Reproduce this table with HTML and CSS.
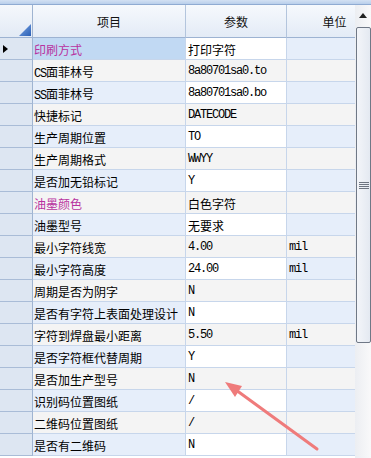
FILE: index.html
```html
<!DOCTYPE html>
<html>
<head>
<meta charset="utf-8">
<link rel="stylesheet" href="styles.css">
</head>
<body>
<div class="window">
  <div class="topstrip"></div>
  <div class="main">
    <div class="viewport">
      <div class="table">
        <div class="row head">
          <div class="rh corner"><svg width="12" height="12" viewBox="0 0 12 12"><defs><linearGradient id="tg" x1="0" y1="0" x2="1" y2="1"><stop offset="0" stop-color="#7fa9e6"/><stop offset="1" stop-color="#2a5fb5"/></linearGradient></defs><polygon points="12,0 12,12 0,12" fill="url(#tg)"/></svg></div>
          <div class="hc">项目</div>
          <div class="hc">参数</div>
          <div class="hc">单位</div>
        </div>
        <div class="row sel">
          <div class="rh"><svg width="5" height="8" viewBox="0 0 5 8"><polygon points="0,0 5,4 0,8" fill="#000"/></svg></div>
          <div class="c name pink">印刷方式</div>
          <div class="c val">打印字符</div>
          <div class="c unit"></div>
        </div>
        <div class="row alt">
          <div class="rh"></div>
          <div class="c name"><span class="m">CS</span>面菲林号</div>
          <div class="c val m">8a80701sa0.to</div>
          <div class="c unit"></div>
        </div>
        <div class="row">
          <div class="rh"></div>
          <div class="c name"><span class="m">SS</span>面菲林号</div>
          <div class="c val m">8a80701sa0.bo</div>
          <div class="c unit"></div>
        </div>
        <div class="row alt">
          <div class="rh"></div>
          <div class="c name">快捷标记</div>
          <div class="c val m">DATECODE</div>
          <div class="c unit"></div>
        </div>
        <div class="row">
          <div class="rh"></div>
          <div class="c name">生产周期位置</div>
          <div class="c val m">TO</div>
          <div class="c unit"></div>
        </div>
        <div class="row alt">
          <div class="rh"></div>
          <div class="c name">生产周期格式</div>
          <div class="c val m">WWYY</div>
          <div class="c unit"></div>
        </div>
        <div class="row">
          <div class="rh"></div>
          <div class="c name">是否加无铅标记</div>
          <div class="c val m">Y</div>
          <div class="c unit"></div>
        </div>
        <div class="row alt">
          <div class="rh"></div>
          <div class="c name pink">油墨颜色</div>
          <div class="c val">白色字符</div>
          <div class="c unit"></div>
        </div>
        <div class="row">
          <div class="rh"></div>
          <div class="c name">油墨型号</div>
          <div class="c val">无要求</div>
          <div class="c unit"></div>
        </div>
        <div class="row alt">
          <div class="rh"></div>
          <div class="c name">最小字符线宽</div>
          <div class="c val m">4.00</div>
          <div class="c unit m">mil</div>
        </div>
        <div class="row">
          <div class="rh"></div>
          <div class="c name">最小字符高度</div>
          <div class="c val m">24.00</div>
          <div class="c unit m">mil</div>
        </div>
        <div class="row alt">
          <div class="rh"></div>
          <div class="c name">周期是否为阴字</div>
          <div class="c val m">N</div>
          <div class="c unit"></div>
        </div>
        <div class="row">
          <div class="rh"></div>
          <div class="c name">是否有字符上表面处理设计</div>
          <div class="c val m">N</div>
          <div class="c unit"></div>
        </div>
        <div class="row alt">
          <div class="rh"></div>
          <div class="c name">字符到焊盘最小距离</div>
          <div class="c val m">5.50</div>
          <div class="c unit m">mil</div>
        </div>
        <div class="row">
          <div class="rh"></div>
          <div class="c name">是否字符框代替周期</div>
          <div class="c val m">Y</div>
          <div class="c unit"></div>
        </div>
        <div class="row alt">
          <div class="rh"></div>
          <div class="c name">是否加生产型号</div>
          <div class="c val m">N</div>
          <div class="c unit"></div>
        </div>
        <div class="row">
          <div class="rh"></div>
          <div class="c name">识别码位置图纸</div>
          <div class="c val m">/</div>
          <div class="c unit"></div>
        </div>
        <div class="row alt">
          <div class="rh"></div>
          <div class="c name">二维码位置图纸</div>
          <div class="c val m">/</div>
          <div class="c unit"></div>
        </div>
        <div class="row">
          <div class="rh"></div>
          <div class="c name">是否有二维码</div>
          <div class="c val m">N</div>
          <div class="c unit"></div>
        </div>
      </div>
    </div>
    <div class="vscroll">
      <div class="sb-up"><svg width="8" height="5" viewBox="0 0 8 5"><polygon points="0,5 4,0 8,5" fill="#222"/></svg></div>
      <div class="sb-thumb">
        <svg width="10" height="7" viewBox="0 0 10 7"><rect x="0" y="0" width="10" height="1" fill="#6d7480"/><rect x="0" y="2" width="10" height="1" fill="#6d7480"/><rect x="0" y="4" width="10" height="1" fill="#6d7480"/><rect x="0" y="6" width="10" height="1" fill="#6d7480"/></svg>
      </div>
      <div class="sb-track"></div>
    </div>
  </div>
  <svg class="annot" width="371" height="458" viewBox="0 0 371 458">
    <line x1="317" y1="449" x2="236" y2="390" stroke="#ef7b7b" stroke-width="3" stroke-linecap="round"/>
    <polygon points="225,382 242,386 235,397" fill="#ef7b7b"/>
  </svg>
</div>
</body>
</html>
```

FILE: styles.css
```css
html, body {
  margin: 0;
  padding: 0;
  background: #ffffff;
}

.window {
  position: relative;
  width: 371px;
  height: 458px;
  overflow: hidden;
  display: flex;
  flex-direction: column;
  font-family: "Noto Sans CJK SC", "Liberation Sans", sans-serif;
  font-size: 12px;
  color: #000;
}

.topstrip {
  height: 5px;
  flex: none;
  box-sizing: border-box;
  background: linear-gradient(#d3e1f3, #b9cfeb);
  border-bottom: 1px solid #8fabd2;
}

.main {
  flex: 1;
  display: flex;
  min-height: 0;
}

.viewport {
  flex: 1;
  overflow: hidden;
  min-width: 0;
}

.table {
  width: 383px;
}

.row {
  display: grid;
  grid-template-columns: 33px 153px 101px 96px;
  height: 22px;
}

.row.head {
  height: 33px;
}

.rh {
  box-sizing: border-box;
  background: #dde6f2;
  border-right: 1px solid #9fb4d1;
  border-bottom: 1px solid #a9bcd7;
  display: flex;
  align-items: center;
  padding-left: 3px;
}

.rh.corner {
  background: linear-gradient(#f5f8fc, #e2eaf5);
  border-bottom: 1px solid #9db3d2;
  align-items: flex-end;
  justify-content: flex-end;
  padding: 0 1px 1px 0;
}

.rh.corner svg {
  display: block;
}

.hc {
  box-sizing: border-box;
  background: linear-gradient(#f6f9fd, #e3ebf6);
  border-right: 1px solid #b3c5dd;
  border-bottom: 1px solid #9db3d2;
  display: flex;
  align-items: center;
  justify-content: center;
  font-size: 12px;
  color: #111;
  padding-top: 1px;
}

.c {
  box-sizing: border-box;
  border-right: 1px solid #c7d6eb;
  border-bottom: 1px solid #c7d6eb;
  line-height: 21px;
  padding-top: 1px;
  white-space: nowrap;
  overflow: hidden;
  padding-left: 1px;
  background: #ffffff;
}

.c.name,
.c.unit {
  background: #e6eefa;
}

.row.alt .c {
  background: #f4f4f4;
}

.row.sel .c.name {
  background: #c1d9f3;
}

.c.val,
.c.unit {
  padding-left: 2px;
}

.pink {
  color: #b8329f;
}

.m {
  font-family: "Liberation Mono", "DejaVu Sans Mono", monospace;
  font-size: 12px;
  letter-spacing: -1.2px;
}

.vscroll {
  width: 16px;
  flex: none;
  display: flex;
  flex-direction: column;
  background: linear-gradient(90deg, #eceef2, #f9f9fa);
}

.sb-up {
  height: 22px;
  flex: none;
  display: flex;
  justify-content: center;
  padding-top: 8px;
  box-sizing: border-box;
}

.sb-up svg {
  display: block;
}

.sb-thumb {
  height: 316px;
  flex: none;
  box-sizing: border-box;
  margin-left: 1px;
  border: 1px solid #6f7886;
  border-radius: 2px;
  background: linear-gradient(90deg, #f3f5f9, #e4e9f1);
  display: flex;
  align-items: center;
  justify-content: center;
}

.sb-thumb svg {
  display: block;
}

.sb-track {
  flex: 1;
}

.annot {
  position: absolute;
  left: 0;
  top: 0;
  pointer-events: none;
}
```
